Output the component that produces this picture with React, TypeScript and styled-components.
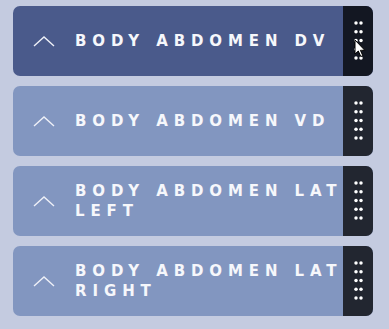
import React from "react";
import styled, { createGlobalStyle } from "styled-components";

const Global = createGlobalStyle`
  html, body { margin: 0; padding: 0; background: #c4cbe0; }
  body { font-family: "DejaVu Sans", "Liberation Sans", sans-serif; }
`;

const Page = styled.div`
  padding: 6px 16px 13px 13px;
  display: flex;
  flex-direction: column;
  gap: 10px;
`;

const Card = styled.div<{ $active?: boolean }>`
  display: flex;
  height: 70px;
  border-radius: 7px;
  overflow: hidden;
  background: ${(p) => (p.$active ? "#4a5a8b" : "#8296c0")};
`;

const Main = styled.div`
  flex: 1;
  min-width: 0;
  display: flex;
  align-items: center;
  padding: 0 0 0 20px;
  gap: 20px;
`;

const Title = styled.div`
  color: #f6f7fb;
  font-family: "DejaVu Sans", "Liberation Sans", sans-serif;
  font-weight: 700;
  font-size: 15px;
  line-height: 20px;
  letter-spacing: 5.9px;
  text-transform: uppercase;
`;

const Handle = styled.div<{ $active?: boolean }>`
  position: relative;
  width: 30px;
  flex: none;
  display: flex;
  align-items: center;
  justify-content: center;
  background: ${(p) => (p.$active ? "#131722" : "#222630")};
`;

const DotsSvg = styled.svg`
  margin-bottom: 2px;
`;

const Cursor = styled.svg`
  position: absolute;
  left: 11px;
  top: 33px;
`;

const Chevron = () => (
  <svg width="22" height="11" viewBox="0 0 22 11" style={{ flex: "none" }}>
    <path d="M1 10 L11 1 L21 10" fill="none" stroke="#eef0f7" strokeWidth="1.4" />
  </svg>
);

const Dots = () => (
  <DotsSvg width="9" height="39" viewBox="0 0 9 39">
    {[0, 1, 2, 3, 4].map((r) =>
      [0, 1].map((c) => (
        <circle key={`${r}-${c}`} cx={2 + c * 5} cy={2 + r * 8.75} r={1.75} fill="#ffffff" />
      ))
    )}
  </DotsSvg>
);

const items = [
  "Body Abdomen DV",
  "Body Abdomen VD",
  "Body Abdomen Lat Left",
  "Body Abdomen Lat Right",
];

export default function App() {
  return (
    <>
      <Global />
      <Page>
        {items.map((t, i) => (
          <Card key={t} $active={i === 0}>
            <Main>
              <Chevron />
              <Title>{t}</Title>
            </Main>
            <Handle $active={i === 0}>
              <Dots />
              {i === 0 && (
                <Cursor width="12" height="19" viewBox="0 0 12 19">
                  <path
                    d="M1 1 L1 15 L4.3 12 L6.8 17.5 L8.8 16.6 L6.4 11.3 L10.8 11.3 Z"
                    fill="#ffffff"
                    stroke="#000000"
                    strokeWidth="1"
                    strokeLinejoin="round"
                  />
                </Cursor>
              )}
            </Handle>
          </Card>
        ))}
      </Page>
    </>
  );
}
